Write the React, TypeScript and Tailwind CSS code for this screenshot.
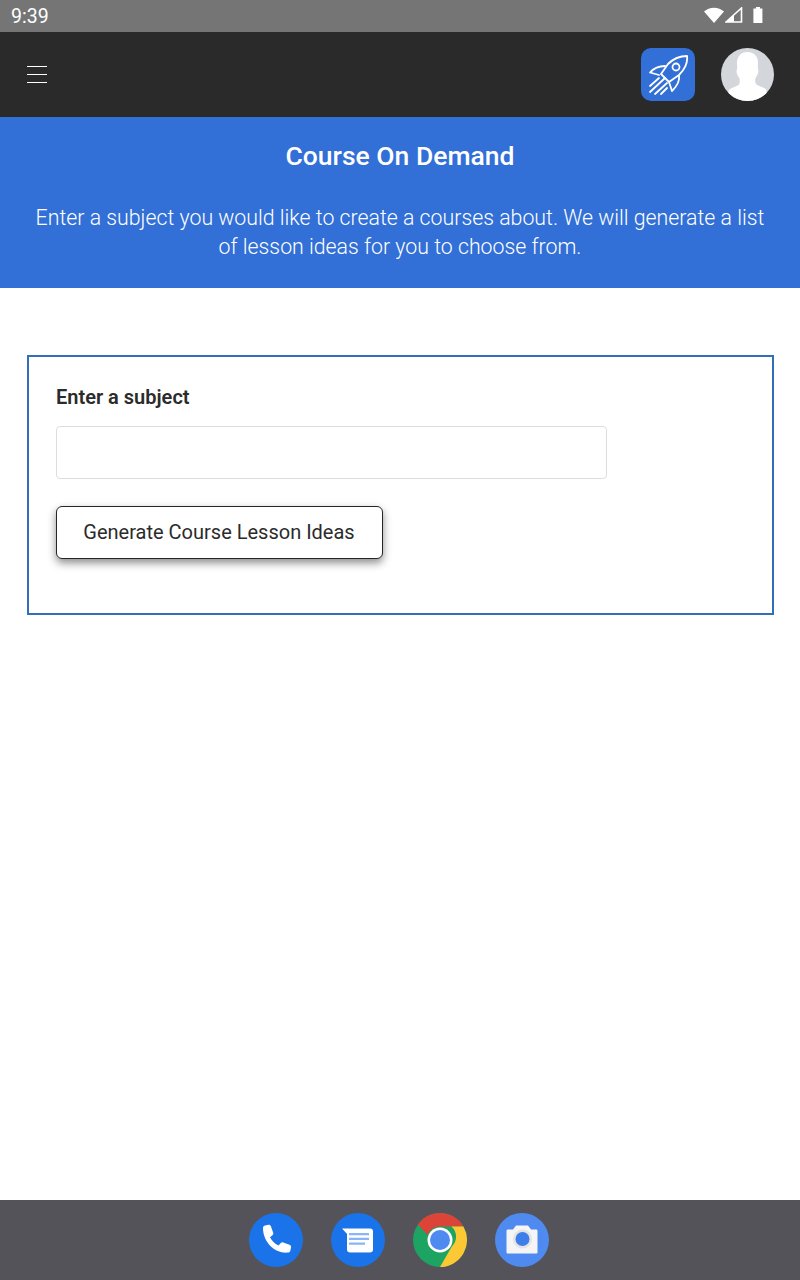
import React from "react";

function StatusIcons() {
  return (
    <div className="flex items-center mr-[36px] mb-[2px]">
      <svg width="20" height="16" viewBox="0 0 20 16">
        <path d="M0 4.500C2.800 2 6.200 0.700 10 0.700s7.200 1.300 10 3.800L10 16z" fill="#fff" />
      </svg>
      <svg width="18" height="16" viewBox="0 0 18 16" className="ml-[1px]">
        <path d="M1 15L16.500 1v14z" fill="none" stroke="#fff" strokeWidth="1.600" />
        <path d="M1 15l8-7.500V15z" fill="#fff" />
      </svg>
      <svg width="12" height="16" viewBox="0 0 12 16" className="ml-[9px]">
        <path d="M4 0h4v1.500h2.400V16H1.400V1.500H4z" fill="#fff" />
      </svg>
    </div>
  );
}

function RocketIcon() {
  return (
    <svg width="42" height="42" viewBox="0 0 42 42" fill="none" stroke="#fff" strokeWidth="1.800" strokeLinecap="round" strokeLinejoin="round">
      <path d="M40 2C33 2 26 5 21 10L14 20l8 8 10-7C37 16 41 9 40 2z" />
      <circle cx="29" cy="13" r="3.500" />
      <path d="M18 12C12 12 7 14 3 18.500L12 21" />
      <path d="M32 22C33 27 30 32 25 37L22 28" />
      <path d="M18 24L3 38M12 24L3 32M20 29L8 40M20 34L14 40" />
    </svg>
  );
}

function Avatar() {
  return (
    <div className="w-[53px] h-[53px] rounded-full overflow-hidden bg-[#d3d6db]">
      <svg width="53" height="53" viewBox="0 0 53 53">
        <path
          d="M26.500 4c-6.500 0-10.500 4.500-10.500 11 0 3 .5 6-.5 8 0 3 1.500 5 3 7.500.5 2.500.5 5-1 6.500-3 2-8 3-10 5.500v10.500h38V42c-2-2.500-7-3.500-10-5.500-1.500-1.500-1.500-4-1-6.500 1.500-2.500 3-4.500 3-7.500-1-2-.5-5-.5-8C37 8.500 33 4 26.500 4z"
          fill="#fff"
        />
      </svg>
    </div>
  );
}

function PhoneApp() {
  return (
    <div className="w-[54px] h-[54px] rounded-full bg-[#1a73e8] flex items-center justify-center">
      <svg width="34" height="34" viewBox="0 0 34 34">
        <path
          d="M4 5c0-1.500 1-2.300 2-2.600l3.500-.6c1.200-.2 2 .4 2.400 1.500l2.300 6.500c.3 1 0 1.800-.8 2.400l-2.400 2c1.800 3.700 4.600 6.500 8.500 8.400l2.300-2.500c.7-.7 1.500-.9 2.400-.6l6.300 2.300c1.200.4 1.700 1.300 1.500 2.500l-.6 3.200c-.3 1.400-1.300 2.200-2.800 2.100C15.500 30.500 4 19 4 5z"
          fill="#fff"
        />
      </svg>
    </div>
  );
}

function MessagesApp() {
  return (
    <div className="w-[54px] h-[54px] rounded-full bg-[#1a73e8] flex items-center justify-center">
      <svg width="34" height="34" viewBox="0 0 34 34">
        <path d="M1.500 6h27.500c2 0 3 1 3 3v18c0 2-1 3-3 3H9c-2 0-3-1-3-3V12z" fill="#0d47a1" opacity="0.35" />
        <path d="M1 5.500h28c2 0 3 1 3 3v18c0 2-1 3-3 3H9c-2 0-3-1-3-3V11z" fill="#fff" />
        <path d="M8 10h20v2.200H8zM8 14.800h20V17H8zM8 19.600h16v2.200H8z" fill="#8ab4f8" />
      </svg>
    </div>
  );
}

function ChromeApp() {
  return (
    <div className="w-[54px] h-[54px]">
      <svg width="54" height="54" viewBox="0 0 54 54">
        <circle cx="27" cy="27" r="27" fill="#1da462" />
        <path d="M27 0a27 27 0 0 1 23.400 13.500H27a13.500 13.500 0 0 0-12.500 8.500L4.800 11.500A27 27 0 0 1 27 0z" fill="#db4437" />
        <path d="M50.400 13.500A27 27 0 0 1 27 54l11.700-20.300a13.500 13.500 0 0 0-.3-20.200z" fill="#fcc934" />
        <circle cx="27" cy="27" r="12.500" fill="#fff" />
        <circle cx="27" cy="27" r="10" fill="#4e8af0" />
      </svg>
    </div>
  );
}

function CameraApp() {
  return (
    <div className="w-[54px] h-[54px] rounded-full bg-[#4e8af0] flex items-center justify-center">
      <svg width="34" height="34" viewBox="0 0 34 34">
        <path d="M11 2.500h12l3 4h5c1 0 1.500.5 1.500 1.500v21c0 1-.5 1.500-1.500 1.500H3c-1 0-1.500-.5-1.500-1.500V8c0-1 .5-1.500 1.500-1.500h5z" fill="#f5f5f5" />
        <circle cx="17.500" cy="16" r="9.500" fill="#e3e3e3" />
        <circle cx="17.500" cy="16" r="7" fill="#3d7eea" />
      </svg>
    </div>
  );
}

export default function App() {
  return (
    <div className="h-[1280px] flex flex-col bg-white font-['Roboto',sans-serif] text-[#2b2b2b]">
      {/* android status bar */}
      <div className="h-8 shrink-0 bg-[#757575] flex items-center justify-between pl-[11px]">
        <span className="text-[19.500px] text-white pt-px">9:39</span>
        <StatusIcons />
      </div>

      {/* top nav */}
      <div className="h-[85px] shrink-0 bg-[#2a2a2a] flex items-center justify-between pl-[27px] pr-[26px]">
        <div className="flex flex-col gap-[7px]">
          <div className="w-5 h-px bg-white" />
          <div className="w-5 h-px bg-white" />
          <div className="w-5 h-px bg-white" />
        </div>
        <div className="flex items-center gap-[26px]">
          <div className="w-[54px] h-[53px] rounded-[10px] bg-[#326fd6] flex items-center justify-center">
            <RocketIcon />
          </div>
          <Avatar />
        </div>
      </div>

      {/* banner */}
      <div className="h-[171px] shrink-0 bg-[#326fd6] text-white text-center px-8 pt-[22px]">
        <h1 className="text-[26.500px] leading-[34px] font-medium">Course On Demand</h1>
        <p className="mt-[30px] text-[21.300px] leading-[29px] font-light">
          Enter a subject you would like to create a courses about. We will generate a list of lesson ideas for you to choose from.
        </p>
      </div>

      <div className="flex-1 pl-[27px] pr-[26px] pt-[67px]">
        <div className="h-[260px] border-2 border-[#326fb8] px-[27px] pt-[26px]">
          <label className="block text-[20px] leading-[28px] font-semibold">Enter a subject</label>
          <input className="block mt-[15px] w-[551px] h-[53px] rounded-[4px] border border-[#dddddd] bg-white" />
          <button className="block mt-[27px] pb-[1px] w-[327px] h-[53px] rounded-[6px] border border-[#262626] bg-white text-[20px] leading-[48px] pr-px shadow-[0_4px_8px_rgba(0,0,0,0.45)]">
            Generate Course Lesson Ideas
          </button>
        </div>
      </div>

      {/* android dock */}
      <div className="h-20 shrink-0 bg-[#545359] flex items-center justify-center gap-[28px] pr-[2px] pb-px">
        <PhoneApp />
        <MessagesApp />
        <ChromeApp />
        <CameraApp />
      </div>
    </div>
  );
}
